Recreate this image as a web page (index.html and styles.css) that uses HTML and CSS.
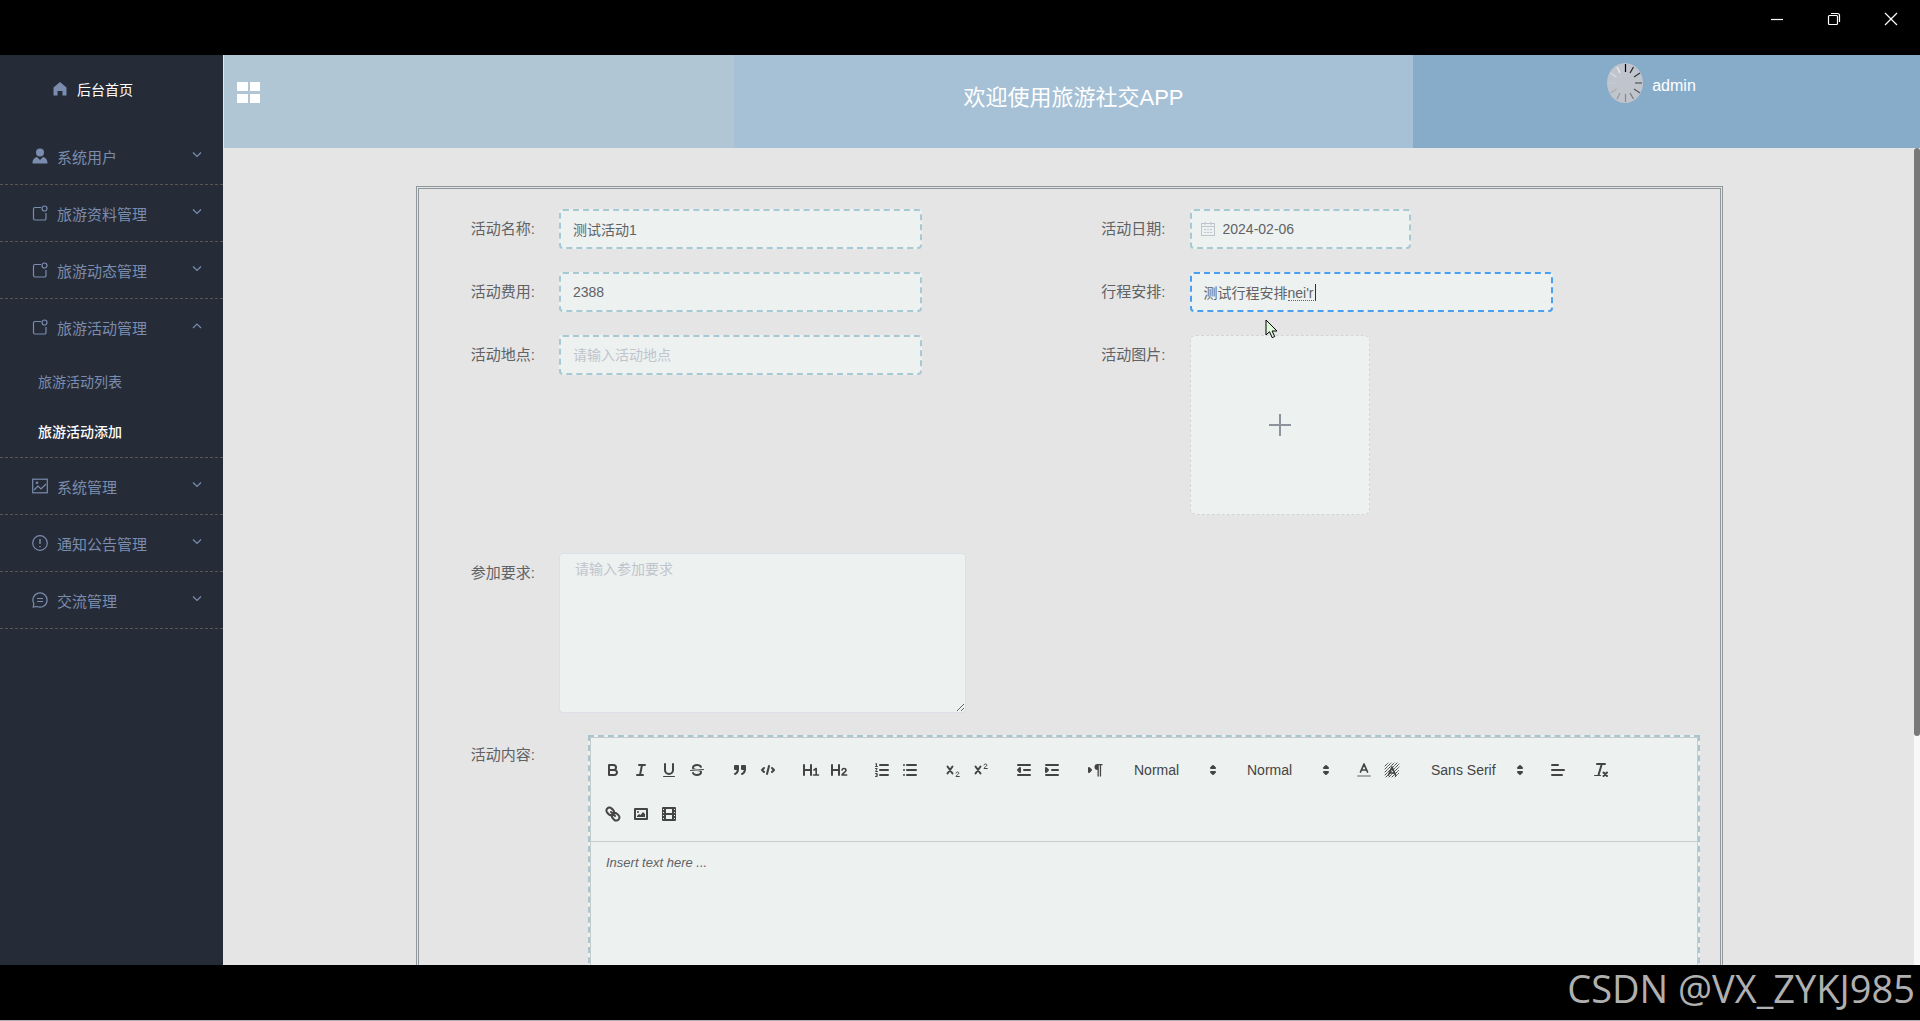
FILE: index.html
```html
<!DOCTYPE html>
<html lang="zh-CN">
<head>
<meta charset="utf-8">
<title>旅游社交APP</title>
<link rel="stylesheet" href="styles.css">
</head>
<body>
<div class="titlebar">
  <button type="button" aria-label="最小化"><svg width="14" height="14" viewBox="0 0 14 14"><path d="M1 7.5h12"/></svg></button>
  <button type="button" aria-label="还原"><svg width="14" height="14" viewBox="0 0 14 14"><rect x="1.5" y="3.5" width="9" height="9" rx="1"/><path d="M4 1.5h6.500a2 2 0 0 1 2 2V10"/></svg></button>
  <button type="button" aria-label="关闭"><svg width="14" height="14" viewBox="0 0 14 14"><path d="M1 1l12 12M13 1L1 13"/></svg></button>
</div>

<div class="shell">
  <nav class="sidebar">
    <a class="home" href="#"><svg width="16" height="16" viewBox="0 0 16 16"><path fill="currentColor" d="M8 1l6.500 5.500V14.500H10.500V10h-5v4.500H1.500V6.500z"/></svg>后台首页</a>
    <div class="group">
      <a class="item" href="#"><svg width="16" height="16" viewBox="0 0 16 16"><circle cx="8" cy="4.500" r="4" fill="currentColor"/><path fill="currentColor" d="M.5 15.500c0-4 2-6 4.500-6.500l3 3 3-3c2.500.5 4.500 2.500 4.500 6.500z"/></svg><span>系统用户</span><svg class="chev" width="10" height="6" viewBox="0 0 10 6"><path d="M1 .5l4 4 4-4"/></svg></a>
    </div>
    <div class="group">
      <a class="item" href="#"><svg class="ln" width="16" height="16" viewBox="0 0 16 16"><path d="M9 2.500H3a1.500 1.500 0 0 0-1.500 1.500v9.500A1.500 1.500 0 0 0 3 15h9.500a1.500 1.500 0 0 0 1.500-1.500V8"/><circle cx="12.500" cy="3.500" r="2.500"/></svg><span>旅游资料管理</span><svg class="chev" width="10" height="6" viewBox="0 0 10 6"><path d="M1 .5l4 4 4-4"/></svg></a>
    </div>
    <div class="group">
      <a class="item" href="#"><svg class="ln" width="16" height="16" viewBox="0 0 16 16"><path d="M9 2.500H3a1.500 1.500 0 0 0-1.500 1.500v9.500A1.500 1.500 0 0 0 3 15h9.500a1.500 1.500 0 0 0 1.500-1.500V8"/><circle cx="12.500" cy="3.500" r="2.500"/></svg><span>旅游动态管理</span><svg class="chev" width="10" height="6" viewBox="0 0 10 6"><path d="M1 .5l4 4 4-4"/></svg></a>
    </div>
    <div class="group">
      <a class="item" href="#"><svg class="ln" width="16" height="16" viewBox="0 0 16 16"><path d="M9 2.500H3a1.500 1.500 0 0 0-1.500 1.500v9.500A1.500 1.500 0 0 0 3 15h9.500a1.500 1.500 0 0 0 1.500-1.500V8"/><circle cx="12.500" cy="3.500" r="2.500"/></svg><span>旅游活动管理</span><svg class="chev" width="10" height="6" viewBox="0 0 10 6"><path d="M1 5l4-4 4 4"/></svg></a>
      <div class="subs">
        <a class="sub" href="#">旅游活动列表</a>
        <a class="sub active" href="#">旅游活动添加</a>
      </div>
    </div>
    <div class="group">
      <a class="item" href="#"><svg class="ln" width="16" height="16" viewBox="0 0 16 16"><rect x=".7" y="1.200" width="14.600" height="13.600"/><path d="M2 12l4-4 3 3 5-5"/><circle cx="5" cy="4.800" r=".7"/></svg><span>系统管理</span><svg class="chev" width="10" height="6" viewBox="0 0 10 6"><path d="M1 .5l4 4 4-4"/></svg></a>
    </div>
    <div class="group">
      <a class="item" href="#"><svg class="ln" width="16" height="16" viewBox="0 0 16 16"><circle cx="8" cy="8" r="7.300"/><path d="M8 4v5M8 11v1.300" stroke-width="1.400"/></svg><span>通知公告管理</span><svg class="chev" width="10" height="6" viewBox="0 0 10 6"><path d="M1 .5l4 4 4-4"/></svg></a>
    </div>
    <div class="group">
      <a class="item" href="#"><svg class="ln" width="16" height="16" viewBox="0 0 16 16"><path d="M1.200 15l.7-3.300A7.100 7.100 0 1 1 5 14.500zM5 6.500h6M5 9.500h6"/></svg><span>交流管理</span><svg class="chev" width="10" height="6" viewBox="0 0 10 6"><path d="M1 .5l4 4 4-4"/></svg></a>
    </div>
  </nav>

  <div class="main">
    <header class="header">
      <div class="head-left"><button type="button" aria-label="菜单"><svg width="23" height="21" viewBox="0 0 23 21"><path fill="#fff" d="M0 0h11v9H0zM13 0h10v9H13zM0 12h11v9H0zM13 12h10v9H13z"/></svg></button></div>
      <h1 class="head-title">欢迎使用旅游社交APP</h1>
      <div class="head-user">
        <svg width="36" height="40" viewBox="0 0 36 40"><ellipse cx="18" cy="20" rx="18" ry="20" fill="#c0c4cc"/>
          <g stroke-width="1.200">
            <path stroke="#000" d="M18.500 1v8"/><path stroke="#222" d="M26.500 4l-3.500 6"/><path stroke="#333" d="M33 10l-6 4"/><path stroke="#555" d="M35 20h-7"/><path stroke="#555" d="M33 30l-6-4"/><path stroke="#777" d="M26.500 36l-3.500-6"/><path stroke="#888" d="M18.500 39v-8"/><path stroke="#999" d="M10 36l3-6"/><path stroke="#aaa" d="M3.500 30l6-4"/><path stroke="#c8cbd1" d="M1 20h7"/><path stroke="#dcdfe4" d="M3.500 10l6 4"/><path stroke="#eee" d="M10 4l3 6"/>
          </g></svg>
        <span>admin</span>
      </div>
    </header>

    <div class="viewport">
      <div class="content">
        <form class="form">
          <div class="grid">
            <div class="row"><label for="name">活动名称:</label><input class="field" id="name" type="text" value="测试活动1"></div>
            <div class="row"><label for="date">活动日期:</label>
              <div class="date"><svg width="14" height="14" viewBox="0 0 14 14" fill="none" stroke="#c0c4cc"><rect x=".5" y="1.500" width="13" height="12"/><path d="M1 4.500h12M4 0v3M10 0v3"/><path d="M3 7.500h8M3 10.500h8" stroke-dasharray="2 1"/></svg><input class="field" id="date" type="text" value="2024-02-06"></div></div>
            <div class="row"><label for="fee">活动费用:</label><input class="field" id="fee" type="text" value="2388"></div>
            <div class="row"><label for="plan">行程安排:</label>
              <div class="compose"><input class="field focused" id="plan" type="text" value="测试行程安排nei'r"><i class="ime"></i>
                <svg class="pointer" width="13" height="20" viewBox="0 0 13 20"><path d="M1 1v15l3.500-3.300 2.700 6 2.500-1.200-2.600-5.500H12z" fill="#dff8dc" stroke="#000"/></svg></div></div>
            <div class="row"><label for="place">活动地点:</label><input class="field" id="place" type="text" placeholder="请输入活动地点"></div>
            <div class="row"><label for="photo">活动图片:</label>
              <button class="upload" id="photo" type="button"><svg width="24" height="24" viewBox="0 0 24 24"><path d="M12 1v22M1 12h22" stroke="#8c939d" stroke-width="2"/></svg></button></div>
          </div>
          <div class="row need"><label for="need">参加要求:</label><textarea id="need" placeholder="请输入参加要求"></textarea></div>
          <div class="row"><label for="body">活动内容:</label>
            <div class="editor">
              <div class="toolbar">
                <span class="tools">
                  <button type="button" aria-label="粗体"><svg viewBox="0 0 18 18"><path d="M5,4H9.500A2.500,2.500,0,0,1,12,6.500v0A2.500,2.500,0,0,1,9.500,9H5ZM5,9h5.500A2.500,2.500,0,0,1,13,11.500v0A2.500,2.500,0,0,1,10.500,14H5Z"/></svg></button>
                  <button type="button" aria-label="斜体"><svg viewBox="0 0 18 18"><path d="M7 4h6M5 14h6M8 14l2-10"/></svg></button>
                  <button type="button" aria-label="下划线"><svg viewBox="0 0 18 18"><path d="M5,3V9a4,4,0,0,0,8,0V3"/><rect class="f" x="3" y="15" width="12" height="1" rx=".5"/></svg></button>
                  <button type="button" aria-label="删除线"><svg viewBox="0 0 18 18"><path d="M15.500 8.500l-13 1" stroke-width="1"/><path class="f" d="M9,8C6.500,7.800,6,7.500,6,6.500,6,5.800,7.300,5,9,5c1.600,0,2.800.7,3,1.300a1,1,0,0,0,1.900-.6C13.400,4.100,11.400,3,9,3,6.200,3,4,4.500,4,6.500a3.200,3.200,0,0,0,.5,1.800ZM9,10c2.500.2,3,.5,3,1.500,0,.7-1.300,1.500-3,1.500-1.600,0-2.800-.7-3-1.300a1,1,0,1,0-1.900.6C4.600,13.900,6.600,15,9,15c2.800,0,5-1.500,5-3.500a3.200,3.200,0,0,0-.5-1.800Z"/></svg></button>
                </span>
                <span class="tools">
                  <button type="button" aria-label="引用"><svg viewBox="0 0 18 18"><g class="fs"><rect x="4" y="5" width="3" height="3"/><rect x="11" y="5" width="3" height="3"/><path d="M7,8c0,4-3,5-3,5M14,8c0,4-3,5-3,5"/></g></svg></button>
                  <button type="button" aria-label="代码"><svg viewBox="0 0 18 18"><path d="M5 7L3 9l2 2M13 7l2 2-2 2M10 5L8 13"/></svg></button>
                </span>
                <span class="tools">
                  <button type="button" aria-label="标题1"><svg viewBox="0 0 18 18"><path d="M2 4v10M9 4v10M2 9h7"/><path d="M12 9l2.200-1.500V14M11.500 14h5" stroke-width="1.600"/></svg></button>
                  <button type="button" aria-label="标题2"><svg viewBox="0 0 18 18"><path d="M2 4v10M9 4v10M2 9h7"/><path d="M12 9c.5-2 4-2 4 .2 0 1.800-3.500 2.800-4 4.800h4.700" stroke-width="1.600"/></svg></button>
                </span>
                <span class="tools">
                  <button type="button" aria-label="有序列表"><svg viewBox="0 0 18 18"><path d="M7 4h8M7 9h8M7 14h8"/><path d="M2.500 5.500h2M3.500 5.500v-3l-1 .5M2.500 7.500h1.700L2.500 10.500h2M2.500 12.500h1.700v1.500h-1M4.200 14v1.500H2.500" stroke-width="1"/></svg></button>
                  <button type="button" aria-label="无序列表"><svg viewBox="0 0 18 18"><path d="M6 4h9M6 9h9M6 14h9M3 4h0M3 9h0M3 14h0"/></svg></button>
                </span>
                <span class="tools">
                  <button type="button" aria-label="下标"><svg viewBox="0 0 18 18"><path d="M3.500 5.500l5 7M8.500 5.500l-5 7"/><path d="M12 12c.3-1.500 2.800-1.500 2.800.2 0 1.100-2.400 1.600-2.800 3.300h3.300" stroke-width="1"/></svg></button>
                  <button type="button" aria-label="上标"><svg viewBox="0 0 18 18"><path d="M3.500 5.500l5 7M8.500 5.500l-5 7"/><path d="M12 4c.3-1.500 2.800-1.500 2.800.2 0 1.100-2.400 1.600-2.800 3.300h3.300" stroke-width="1"/></svg></button>
                </span>
                <span class="tools">
                  <button type="button" aria-label="减少缩进"><svg viewBox="0 0 18 18"><path d="M3 14h12M3 4h12M9 9h6"/><path class="fs" d="M5 7v4L3 9z"/></svg></button>
                  <button type="button" aria-label="增加缩进"><svg viewBox="0 0 18 18"><path d="M3 14h12M3 4h12M9 9h6"/><path class="fs" d="M3 7v4l2-2z"/></svg></button>
                </span>
                <span class="tools">
                  <button type="button" aria-label="文字方向"><svg viewBox="0 0 18 18"><path class="fs" d="M3 11V7l2 2z"/><path class="f" d="M11.500 3A3 3 0 1 0 11.500 9V15.500h1.300V4.300h1v11.200h1.300V4.300H16.500V3z"/></svg></button>
                </span>
                <span class="tools"><button class="picker" type="button">Normal<svg viewBox="0 0 18 18"><path class="fs" d="M7 11l2 2 2-2zM7 7l2-2 2 2z"/></svg></button></span>
                <span class="tools"><button class="picker" type="button">Normal<svg viewBox="0 0 18 18"><path class="fs" d="M7 11l2 2 2-2zM7 7l2-2 2 2z"/></svg></button></span>
                <span class="tools">
                  <button type="button" aria-label="文字颜色"><svg viewBox="0 0 18 18"><path d="M3 15h12" opacity=".4"/><path d="M5.500 11L9 3l3.500 8M6.500 9h5" stroke-width="1.700"/></svg></button>
                  <button type="button" aria-label="背景颜色"><svg viewBox="0 0 18 18"><path d="M2 5l3-3M2 8l6-6M2 11l9-9M2 14l12-12M3 16L16 3M6 16L16 6M9 16l7-7M12 16l4-4" stroke-width="1" stroke-dasharray="1 1"/><path d="M5.500 14L9 6l3.500 8M6.500 12h5" stroke-width="1.700"/></svg></button>
                </span>
                <span class="tools"><button class="picker wide" type="button">Sans Serif<svg viewBox="0 0 18 18"><path class="fs" d="M7 11l2 2 2-2zM7 7l2-2 2 2z"/></svg></button></span>
                <span class="tools"><button type="button" aria-label="对齐"><svg viewBox="0 0 18 18"><path d="M3 9h12M3 14h10M3 4h6"/></svg></button></span>
                <span class="tools"><button type="button" aria-label="清除格式"><svg viewBox="0 0 18 18"><path d="M5 3h8M6.500 14L9.500 4" /><path d="M11.500 11.500l3.500 3.500M15 11.500L11.500 15"/><rect class="f" x="2" y="14" width="7" height="1" rx=".5"/></svg></button></span>
                <span class="tools">
                  <button type="button" aria-label="链接"><svg viewBox="0 0 18 18"><path d="M7 7l4 4M8.900 4.600a3.500 3.500 0 0 1 .3 4.700 3.500 3.500 0 0 1-4.700-.3L3.300 7.700A2.900 2.900 0 0 1 3.300 3.500a2.900 2.900 0 0 1 4.300.1zM13.400 9.100a3.500 3.500 0 0 0-4.700-.3 3.500 3.500 0 0 0 .3 4.700l1.200 1.200a2.900 2.900 0 0 0 4.300-.1 2.900 2.900 0 0 0 .1-4.200z"/></svg></button>
                  <button type="button" aria-label="图片"><svg viewBox="0 0 18 18"><rect x="3" y="4" width="12" height="10"/><circle class="f" cx="6" cy="7" r="1"/><path class="f" d="M5 12v-1l2-2 1.500 1L11 7l2 2v3z"/></svg></button>
                  <button type="button" aria-label="视频"><svg viewBox="0 0 18 18"><path class="f" fill-rule="evenodd" d="M3 2h12a1 1 0 0 1 1 1v12a1 1 0 0 1-1 1H3a1 1 0 0 1-1-1V3a1 1 0 0 1 1-1zM6 4v4h6V4zM6 10v4h6v-4zM3 4v1h1V4zM3 7v1h1V7zM3 10v1h1v-1zM3 13v1h1v-1zM14 4v1h1V4zM14 7v1h1V7zM14 10v1h1v-1zM14 13v1h1v-1z"/></svg></button>
                </span>
              </div>
              <textarea class="doc" id="body" placeholder="Insert text here ..."></textarea>
            </div>
          </div>
        </form>
      </div>
      <div class="track"><div class="thumb"></div></div>
    </div>
  </div>
</div>

<footer class="footer">CSDN @VX_ZYKJ985</footer>
</body>
</html>
```

FILE: styles.css
```css
* { box-sizing: border-box; }
body {
  margin: 0;
  height: 100vh;
  display: flex;
  flex-direction: column;
  background: #000;
  color: #606266;
  font-family: "Liberation Sans", "Noto Sans CJK SC", sans-serif;
  font-size: 14px;
}
button { padding: 0; border: 0; background: none; font: inherit; color: inherit; }
a { color: inherit; text-decoration: none; }
svg { display: block; flex: none; }

.titlebar {
  flex: none;
  height: 55px;
  padding: 12px 22px 0;
  display: flex;
  justify-content: flex-end;
  gap: 43px;
}
.titlebar button { height: 14px; }
.titlebar svg { fill: none; stroke: #fff; stroke-width: 1.2; }

.shell { flex: 1; min-height: 0; display: flex; }

.sidebar { flex: none; width: 223px; background: #262b38; color: #7a8dae; overflow: hidden; }
.home {
  height: 68px;
  margin-bottom: 5px;
  padding-left: 52px;
  display: flex;
  align-items: center;
  gap: 9px;
  color: #fff;
}
.home svg { color: #7a8dae; }
.group { border-bottom: 1px dashed #595655; }
.item {
  height: 56px;
  padding: 0 21px 0 32px;
  display: flex;
  align-items: center;
  gap: 9px;
  font-size: 15px;
}
.item span { flex: 1; }
.ln, .chev { fill: none; stroke: currentColor; stroke-width: 1.2; }
.chev { margin-bottom: 2px; }
.subs { padding-top: 2px; }
.sub { display: block; height: 50px; padding-left: 38px; line-height: 50px; }
.sub.active { color: #fff; font-weight: 500; }

.main { flex: 1; min-width: 0; display: flex; flex-direction: column; border-left: 1px solid #e5e5e5; background: #e5e5e5; }
.header { flex: none; height: 93px; display: grid; grid-template-columns: 510fr 679fr 507fr; color: #fff; }
.head-left { padding: 27px 13px; background: #b1c6d4; }
.head-title {
  margin: 0;
  background: #a6c1d6;
  font-size: 22px;
  font-weight: 400;
  line-height: 86px;
  text-align: center;
}
.head-user {
  padding: 8px 30px 0 0;
  background: #87acca;
  display: flex;
  justify-content: center;
  gap: 9px;
  font-size: 16px;
  line-height: 45px;
}

.viewport { flex: 1; min-height: 0; display: flex; }
.content { flex: 1; min-width: 0; padding: 38px 191px 0 192px; overflow: hidden; }
.track { flex: none; width: 6px; background: #f8f8f8; }
.thumb { height: 72%; border-radius: 3px; background: #787878; }

.form { padding: 20px; border: 3px double #8f979b; }
.grid { display: grid; grid-template-columns: 1fr 1fr; row-gap: 23px; }
.row { display: flex; align-items: flex-start; }
.row > label {
  flex: none;
  width: 120px;
  padding-right: 24px;
  font-size: 15px;
  line-height: 40px;
  text-align: right;
}
.field {
  width: 363px;
  height: 40px;
  padding: 0 12px;
  border: 2px dashed #a7c9d4;
  border-radius: 4px;
  background: #edf1f0;
  color: #606266;
  font: inherit;
  outline: none;
}
.field.focused { border-color: #4b9ff0; }
::placeholder { color: #c0c4cc; opacity: 1; }
.date, .compose { position: relative; }
.date svg { position: absolute; left: 11px; top: 13px; }
.date .field { width: 221px; padding-left: 31px; }
.ime {
  position: absolute;
  left: 98px;
  top: 12px;
  width: 28px;
  height: 17px;
  border-bottom: 1px dotted #606266;
  border-right: 1px solid #303133;
}
.pointer { position: absolute; left: 75px; top: 47px; }
.upload {
  width: 180px;
  height: 180px;
  display: flex;
  align-items: center;
  justify-content: center;
  border: 1px dashed #d2d5d6;
  border-radius: 6px;
  background: #edf1f0;
}
.need { margin: 38px 0 22px; }
.need textarea {
  width: 407px;
  height: 160px;
  padding: 5px 15px;
  border: 1px solid #dcdfe6;
  border-radius: 4px;
  background: #edf1f0;
  color: #606266;
  font: inherit;
  line-height: 21px;
}

.editor {
  flex: 1;
  min-width: 0;
  height: 420px;
  margin-left: 29px;
  display: flex;
  flex-direction: column;
  border: 2px dashed #a9c6d0;
  background: #edf1f0;
}
.toolbar {
  padding: 10px 8px 5px;
  display: flex;
  flex-wrap: wrap;
  column-gap: 15px;
  border: 1px solid #c6cccc;
  color: #444;
}
.tools { height: 44px; display: flex; align-items: center; }
.tools button { width: 28px; height: 24px; padding: 0 5px; }
.tools svg { width: 18px; height: 18px; fill: none; stroke: #444; stroke-width: 2; stroke-linecap: round; stroke-linejoin: round; }
.tools .f { fill: #444; stroke: none; }
.tools .fs { fill: #444; }
.tools .picker { width: 98px; padding: 0 0 0 10px; display: flex; align-items: center; justify-content: space-between; }
.tools .wide { width: 108px; }
.doc {
  flex: 1;
  padding: 12px 15px;
  border: 1px solid #c6cccc;
  border-top: 0;
  background: none;
  font: inherit;
  font-size: 13px;
  line-height: 18px;
  resize: none;
}
.doc::placeholder { color: #606266; font-style: italic; }

.footer {
  flex: none;
  height: 56px;
  padding-right: 5px;
  border-bottom: 1px solid #b5adb5;
  color: #b0b0b0;
  font-family: "Open Sans", "Noto Sans", sans-serif;
  font-size: 38px;
  line-height: 46px;
  text-align: right;
}
```
